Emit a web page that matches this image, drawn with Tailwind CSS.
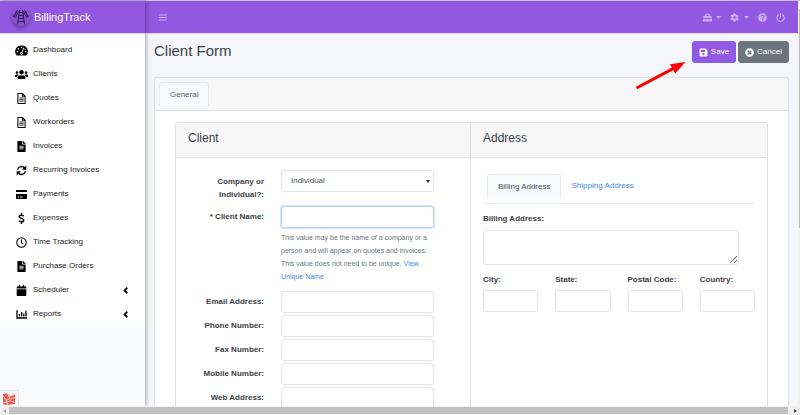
<!DOCTYPE html>
<html lang="en">
<head>
<meta charset="utf-8">
<meta name="viewport" content="width=device-width, initial-scale=1">
<title>BillingTrack - Client Form</title>
<script src="https://cdn.jsdelivr.net/npm/@tailwindcss/browser@4"></script>
</head>
<body class="relative flex h-screen flex-col overflow-hidden bg-[#f4f6fa] font-['Liberation_Sans',Arial,sans-serif] text-[8px] leading-3 text-[#3c4146]">

<svg class="hidden" aria-hidden="true">
  <symbol id="file-outline" viewBox="0 0 384 512">
    <path fill="none" stroke="currentColor" stroke-width="48" stroke-linejoin="round" d="M24 24H240L360 144V488H24ZM232 30V152H356"/>
    <path fill="none" stroke="currentColor" stroke-width="36" d="M92 236H292M92 308H292M92 380H292"/>
  </symbol>
  <symbol id="file-solid" viewBox="0 0 384 512">
    <path fill="currentColor" d="M224 136V0H24C10.700 0 0 10.700 0 24v464c0 13.300 10.700 24 24 24h336c13.300 0 24-10.700 24-24V160H248c-13.200 0-24-10.800-24-24zm64 236c0 6.600-5.400 12-12 12H108c-6.600 0-12-5.400-12-12v-8c0-6.600 5.400-12 12-12h168c6.600 0 12 5.400 12 12v8zm0-64c0 6.600-5.400 12-12 12H108c-6.600 0-12-5.400-12-12v-8c0-6.600 5.400-12 12-12h168c6.600 0 12 5.400 12 12v8zm0-72v8c0 6.600-5.400 12-12 12H108c-6.600 0-12-5.400-12-12v-8c0-6.600 5.400-12 12-12h168c6.600 0 12 5.400 12 12zm96-114.100v6.100H256V0h6.100c6.400 0 12.500 2.500 17 7l97.900 98c4.500 4.500 7 10.600 7 16.900z"/>
  </symbol>
  <symbol id="chevron" viewBox="0 0 10 14">
    <path fill="none" stroke="currentColor" stroke-width="3.600" d="M8.500 1.500L3 7L8.500 12.500"/>
  </symbol>
</svg>

<div class="h-px shrink-0 bg-[#c9c4dc]"></div>

<div class="flex min-h-0 flex-1">
  <aside class="z-10 flex w-[145px] shrink-0 flex-col bg-[#f9fafc] shadow-[1px_0_4px_rgba(0,0,0,0.35)]">
    <a href="#" class="flex h-8 shrink-0 items-center gap-1 bg-[#9358e2] pl-3 text-[11px] text-white">
      <svg class="size-[18px] rounded-full shadow-[0_2px_4px_rgba(0,0,0,0.35)]" viewBox="0 0 36 36" fill="none" stroke="#2c1c45" aria-hidden="true">
        <circle cx="18" cy="18" r="17" fill="#8a4fd6" stroke="none"/>
        <path stroke-width="2" d="M15 4L11 33M21 4L25 33M14 9H22M13 15H23M13 21H24M12 27H25"/>
        <path stroke-width="1.800" d="M11 4L3 18M13 6L7 19M7 8L12 12M5 12L9 16M2 15L7 20M25 4L33 18M23 6L29 19M29 8L24 12M31 12L27 16M34 15L29 20"/>
      </svg>
      BillingTrack
    </a>
    <nav aria-label="Main" class="border-t border-[#e4d8f6] bg-white pt-1 pb-[2px] text-[#1c1c1c]">
      <a href="#" class="flex h-6 items-center gap-[5px] pl-[15px]">
        <svg class="h-[11px] w-[13px] text-black" viewBox="0 0 26 22" aria-hidden="true"><path fill="currentColor" d="M13 1A12 12 0 0 0 3 20.500Q3.300 21 4 21H22Q22.700 21 23 20.500A12 12 0 0 0 13 1Z"/><g fill="#fff"><circle cx="13" cy="4.800" r="1.500"/><circle cx="7" cy="7.500" r="1.500"/><circle cx="4.700" cy="13.500" r="1.500"/><circle cx="21.300" cy="13.500" r="1.500"/><circle cx="19.700" cy="8" r="1.200"/></g><path stroke="#fff" stroke-width="1.800" d="M17.500 5.500L13.600 16"/><circle cx="13" cy="17" r="2.400" fill="#fff"/><circle cx="13" cy="17" r="1" fill="currentColor"/></svg>
        Dashboard
      </a>
      <a href="#" class="flex h-6 items-center gap-[5px] pl-[15px]">
        <svg class="h-[11px] w-[13px] text-black" viewBox="0 0 640 512" aria-hidden="true"><path fill="currentColor" d="M96 224c35.300 0 64-28.700 64-64s-28.700-64-64-64-64 28.700-64 64 28.700 64 64 64zm448 0c35.300 0 64-28.700 64-64s-28.700-64-64-64-64 28.700-64 64 28.700 64 64 64zm32 32h-64c-17.600 0-33.500 7.100-45.100 18.600 40.300 22.100 68.900 62 75.100 109.400h66c17.700 0 32-14.300 32-32v-32c0-35.300-28.700-64-64-64zm-256 0c61.900 0 112-50.100 112-112S381.900 32 320 32 208 82.100 208 144s50.100 112 112 112zm76.800 32h-8.300c-20.800 10-43.900 16-68.500 16s-47.600-6-68.500-16h-8.300C179.600 288 128 339.600 128 403.200V432c0 26.500 21.500 48 48 48h288c26.500 0 48-21.500 48-48v-28.800c0-63.600-51.600-115.200-115.200-115.200zm-223.700-13.400C161.500 263.100 145.600 256 128 256H64c-35.300 0-64 28.700-64 64v32c0 17.700 14.300 32 32 32h65.900c6.300-47.400 34.900-87.300 75.200-109.400z"/></svg>
        Clients
      </a>
      <a href="#" class="flex h-6 items-center gap-[5px] pl-[15px]">
        <svg class="h-[11px] w-[13px] text-black" aria-hidden="true"><use href="#file-outline"/></svg>
        Quotes
      </a>
      <a href="#" class="flex h-6 items-center gap-[5px] pl-[15px]">
        <svg class="h-[11px] w-[13px] text-black" aria-hidden="true"><use href="#file-outline"/></svg>
        Workorders
      </a>
      <a href="#" class="flex h-6 items-center gap-[5px] pl-[15px]">
        <svg class="h-[11px] w-[13px] text-black" aria-hidden="true"><use href="#file-solid"/></svg>
        Invoices
      </a>
      <a href="#" class="flex h-6 items-center gap-[5px] pl-[15px]">
        <svg class="h-[11px] w-[13px] text-black" viewBox="0 0 24 24" fill="none" stroke="currentColor" stroke-width="3" aria-hidden="true"><path d="M3.500 10A9 9 0 0 1 19 6.500M20.500 14A9 9 0 0 1 5 17.500"/><path fill="currentColor" stroke="none" d="M22.500 1V10.500H13ZM1.500 23V13.500H11Z"/></svg>
        Recurring Invoices
      </a>
      <a href="#" class="flex h-6 items-center gap-[5px] pl-[15px]">
        <svg class="h-[11px] w-[13px] text-black" viewBox="0 0 26 22" aria-hidden="true"><path fill="currentColor" d="M3.500 2H22.500Q24 2 24 3.500V6H2V3.500Q2 2 3.500 2ZM2 10H24V18.500Q24 20 22.500 20H3.500Q2 20 2 18.500Z"/><path stroke="#fff" stroke-width="1.800" d="M5 16H8M10 16H15"/></svg>
        Payments
      </a>
      <a href="#" class="flex h-6 items-center gap-[5px] pl-[15px]">
        <svg class="h-[11px] w-[13px] text-black" viewBox="0 0 26 22" fill="none" stroke="currentColor" stroke-width="2.800" aria-hidden="true"><path d="M17.500 6.500C16 5 14.500 4.500 12.500 4.500C10 4.500 8.500 5.600 8.500 7.500C8.500 12 17.500 9.500 17.500 14.500C17.500 16.500 15.700 17.500 13.300 17.500C11.300 17.500 9.500 16.800 8 15.500M13 0V4.500M13 17.500V22"/></svg>
        Expenses
      </a>
      <a href="#" class="flex h-6 items-center gap-[5px] pl-[15px]">
        <svg class="h-[11px] w-[13px] text-black" viewBox="0 0 24 24" fill="none" stroke="currentColor" stroke-width="2.300" aria-hidden="true"><circle cx="12" cy="12" r="10.300"/><path d="M12 5.500V12.500L16 15.500"/></svg>
        Time Tracking
      </a>
      <a href="#" class="flex h-6 items-center gap-[5px] pl-[15px]">
        <svg class="h-[11px] w-[13px] text-black" aria-hidden="true"><use href="#file-solid"/></svg>
        Purchase Orders
      </a>
      <a href="#" class="flex h-6 items-center gap-[5px] pr-[17px] pl-[15px]">
        <svg class="h-[11px] w-[13px] text-black" viewBox="0 0 448 512" aria-hidden="true"><path fill="currentColor" d="M0 464c0 26.500 21.500 48 48 48h352c26.500 0 48-21.500 48-48V192H0v272zm448-352c0-26.500-21.500-48-48-48h-48V12c0-6.600-5.400-12-12-12h-40c-6.600 0-12 5.400-12 12v52H160V12c0-6.600-5.400-12-12-12h-40c-6.600 0-12 5.400-12 12v52H48C21.500 64 0 85.500 0 112v48h448v-48z"/></svg>
        <span class="flex-1">Scheduler</span>
        <svg class="h-[7px] w-[5px] text-black" aria-hidden="true"><use href="#chevron"/></svg>
      </a>
      <a href="#" class="flex h-6 items-center gap-[5px] pr-[17px] pl-[15px]">
        <svg class="h-[11px] w-[13px] text-black" viewBox="0 0 26 22" fill="none" stroke="currentColor" aria-hidden="true"><path stroke-width="2.600" d="M4 2.500V18H24"/><path stroke-width="2.600" d="M9 10V15M13.300 6V15M17.600 9V15M22 3.500V15"/></svg>
        <span class="flex-1">Reports</span>
        <svg class="h-[7px] w-[5px] text-black" aria-hidden="true"><use href="#chevron"/></svg>
      </a>
    </nav>
    <button type="button" aria-label="Debug bar" class="mt-auto flex h-4 w-[19px] items-center border-t border-r border-[#e3e5e8] bg-[#f5f6f7] pl-[3px]">
      <svg class="size-3" viewBox="0 0 24 24" aria-hidden="true"><path fill="#f4533d" d="M0 2L8 1L15 6L24 1V22L6 24L0 22Z"/><path fill="none" stroke="#fff" stroke-width="1.500" d="M0 5L6 14L24 9M6 14L9 24M9 1L14 11M12 6L24 3M0 20L15 16L24 19"/></svg>
    </button>
  </aside>

  <div class="flex min-w-0 flex-1 flex-col">
    <header class="flex h-8 shrink-0 items-center bg-[#9358e2] pr-[13px] pl-[14px] text-[#c9adf0]">
      <button type="button" aria-label="Toggle sidebar">
        <svg class="h-[7px] w-2" viewBox="0 0 16 14" stroke="currentColor" stroke-width="2.400" aria-hidden="true"><path d="M0 2H16M0 7H16M0 12H16"/></svg>
      </button>
      <div class="ml-auto flex items-center gap-[9px]">
        <button type="button" aria-label="Tools" class="flex items-center gap-1">
          <svg class="size-[9px]" viewBox="0 0 18 18" aria-hidden="true"><path fill="none" stroke="currentColor" stroke-width="2" d="M5.500 6V2.500H12.500V6"/><path fill="currentColor" d="M2 5.500H16L18 8V10.500H13V9.500H11V10.500H7V9.500H5V10.500H0V8ZM0 12H5V13H7V12H11V13H13V12H18V17H0Z"/></svg>
          <svg class="h-[3px] w-[5px]" viewBox="0 0 10 6" aria-hidden="true"><path fill="currentColor" d="M0 0H10L5 5.500Z"/></svg>
        </button>
        <button type="button" aria-label="Settings" class="flex items-center gap-[5px]">
          <svg class="size-[9px]" viewBox="0 0 18 18" fill="none" stroke="currentColor" aria-hidden="true"><circle cx="9" cy="9" r="4.500" stroke-width="3.600"/><path stroke-width="4" d="M9 .5V4M9 14V17.500M1.600 4.800L4.700 6.500M13.300 11.500L16.400 13.200M1.600 13.200L4.700 11.500M13.300 6.500L16.400 4.800"/></svg>
          <svg class="h-[3px] w-[5px]" viewBox="0 0 10 6" aria-hidden="true"><path fill="currentColor" d="M0 0H10L5 5.500Z"/></svg>
        </button>
        <button type="button" aria-label="Help">
          <svg class="size-[9px]" viewBox="0 0 18 18" aria-hidden="true"><circle cx="9" cy="9" r="8.700" fill="currentColor"/><path fill="none" stroke="#9358e2" stroke-width="2.200" d="M6 6.800C6.500 3.500 12 3.800 12 6.800C12 8.800 9.200 8.700 9.200 11"/><circle cx="9.200" cy="13.600" r="1.400" fill="#9358e2"/></svg>
        </button>
        <button type="button" aria-label="Log out">
          <svg class="size-[9px]" viewBox="0 0 18 18" fill="none" stroke="currentColor" stroke-width="2.200" stroke-linecap="round" aria-hidden="true"><path d="M5 3.500A7.300 7.300 0 1 0 13 3.500M9 1V8.500"/></svg>
        </button>
      </div>
    </header>

    <main class="min-h-0 flex-1 overflow-hidden border-t border-[#e4d8f6] px-[9px]">
      <div class="flex h-[43px] items-start justify-between pt-[7px]">
        <h1 class="pt-[2px] text-[15px] leading-4 text-[#3c4146]">Client Form</h1>
        <div class="flex gap-[2px]">
          <button type="submit" form="client-form" class="flex h-[22px] items-center gap-[3px] rounded-[3px] border border-[#7d63e6] bg-[#9358e2] px-[6px] text-white">
            <svg class="size-[9px]" viewBox="0 0 448 512" aria-hidden="true"><path fill="currentColor" d="M433.900 129.900l-83.900-83.900A48 48 0 0 0 316.100 32H48C21.500 32 0 53.500 0 80v352c0 26.500 21.500 48 48 48h352c26.500 0 48-21.500 48-48V163.900a48 48 0 0 0-14.100-34zM224 416c-35.300 0-64-28.700-64-64s28.700-64 64-64 64 28.700 64 64-28.700 64-64 64zm96-304.500V212c0 6.600-5.400 12-12 12H76c-6.600 0-12-5.400-12-12V108c0-6.600 5.400-12 12-12h228.500c3.200 0 6.200 1.300 8.500 3.500l3.500 3.500a12 12 0 0 1 3.500 8.500z"/></svg>
            Save
          </button>
          <button type="button" class="flex h-[22px] items-center gap-[3px] rounded-[3px] border border-[#6c757d] bg-[#6c757d] px-[6px] text-white">
            <svg class="size-[9px]" viewBox="0 0 512 512" aria-hidden="true"><path fill="currentColor" d="M256 8C119 8 8 119 8 256s111 248 248 248 248-111 248-248S393 8 256 8zm121.600 313.100c4.700 4.700 4.700 12.300 0 17L338 377.600c-4.700 4.700-12.300 4.700-17 0L256 312l-65.100 65.600c-4.700 4.700-12.300 4.700-17 0L134.400 338c-4.700-4.700-4.700-12.300 0-17l65.600-65-65.600-65.100c-4.700-4.700-4.700-12.300 0-17l39.600-39.600c4.700-4.700 12.300-4.700 17 0l65 65.700 65.100-65.600c4.700-4.700 12.300-4.700 17 0l39.600 39.600c4.700 4.700 4.700 12.300 0 17L312 256l65.600 65.100z"/></svg>
            Cancel
          </button>
        </div>
      </div>

      <section class="rounded-[3px] border border-[#dfe2e6] bg-white shadow-[0_0_1px_rgba(0,0,0,0.15)]">
        <div class="h-[33px] rounded-t-[3px] border-b border-[#e2e4e6] bg-[#f7f7f7] pt-1 pl-1">
          <div class="flex h-7 w-[54px]">
            <a href="#" aria-current="page" class="flex h-[24px] items-center rounded-t-[3px] border border-b-0 border-[#e6eaee] bg-[#f9fafc] px-[10px] text-[#5b636b]">General</a>
          </div>
        </div>

        <form id="client-form" class="px-5 pt-[11px]">
          <div class="grid h-[420px] grid-cols-[294fr_297fr] rounded-t-[3px] border border-[#dfe1e3]">
            <section>
              <h2 class="h-[35px] rounded-tl-[3px] border-b border-[#e2e4e6] bg-[#f7f7f7] pt-[7px] pl-3 text-[12px] leading-4">Client</h2>
              <div class="grid grid-cols-[88px_1fr] gap-x-[17px] pt-3 pr-9">
                <label for="kind" class="pt-[5px] text-right leading-[13px] font-bold">Company or Individual?:</label>
                <div class="relative mb-[14px]">
                  <select id="kind" class="h-[22px] w-full appearance-none rounded-[3px] border border-[#e2e6ea] bg-white px-[9px] text-[#495057]"><option>Individual</option><option>Company</option></select>
                  <svg class="pointer-events-none absolute top-[10px] right-1 h-[3px] w-1" viewBox="0 0 8 6" aria-hidden="true"><path fill="#222" d="M0 0H8L4 6Z"/></svg>
                </div>

                <label for="name" class="pt-[5px] text-right font-bold">* Client Name:</label>
                <div class="mb-2">
                  <input id="name" type="text" aria-describedby="name-help" class="block h-[22px] w-full rounded-[3px] border border-[#b9d7f7] bg-white px-[9px] ring-1 ring-[#cfe3fa] outline-none">
                  <p id="name-help" class="mt-[3px] -mr-2 text-[7px] leading-[13px] text-[#6c757d]">This value may be the name of a company or a<br>person and will appear on quotes and invoices.<br>This value does not need to be unique. <a href="#" class="text-[#3d8ae0]">View<br>Unique Name</a></p>
                </div>

                <label for="email" class="pt-[5px] text-right font-bold">Email Address:</label>
                <input id="email" type="email" class="mb-[2px] h-[22px] w-full rounded-[3px] border border-[#e2e6ea] bg-white px-[9px]">
                <label for="phone" class="pt-[5px] text-right font-bold">Phone Number:</label>
                <input id="phone" type="tel" class="mb-[2px] h-[22px] w-full rounded-[3px] border border-[#e2e6ea] bg-white px-[9px]">
                <label for="fax" class="pt-[5px] text-right font-bold">Fax Number:</label>
                <input id="fax" type="tel" class="mb-[2px] h-[22px] w-full rounded-[3px] border border-[#e2e6ea] bg-white px-[9px]">
                <label for="mobile" class="pt-[5px] text-right font-bold">Mobile Number:</label>
                <input id="mobile" type="tel" class="mb-[2px] h-[22px] w-full rounded-[3px] border border-[#e2e6ea] bg-white px-[9px]">
                <label for="web" class="pt-[5px] text-right font-bold">Web Address:</label>
                <input id="web" type="url" class="mb-[2px] h-[22px] w-full rounded-[3px] border border-[#e2e6ea] bg-white px-[9px]">
              </div>
            </section>

            <section class="border-l border-[#dfe1e3]">
              <h2 class="h-[35px] rounded-tr-[3px] border-b border-[#e2e4e6] bg-[#f7f7f7] pt-[7px] pl-3 text-[12px] leading-4">Address</h2>
              <div class="px-3 pt-4">
                <div class="flex h-[30px] border-b border-[#e9ecef] pl-1">
                  <a href="#" aria-current="page" class="flex h-6 items-center rounded-t-[3px] border border-b-0 border-[#e6eaee] bg-[#f8f9fb] px-[10px] text-[#495057]">Billing Address</a>
                  <a href="#" class="flex h-6 items-center px-[10px] text-[#3d8ae0]">Shipping Address</a>
                </div>
                <label for="address" class="mt-[9px] block font-bold">Billing Address:</label>
                <textarea id="address" class="mt-[5px] block h-[35px] w-[94%] rounded-[3px] border border-[#e2e6ea] bg-white px-[9px]"></textarea>
                <div class="mt-[9px] grid grid-cols-4 gap-x-[17px]">
                  <div><label for="city" class="block font-bold">City:</label><input id="city" type="text" class="mt-1 block h-[22px] w-full rounded-[3px] border border-[#e2e6ea] bg-white px-1"></div>
                  <div><label for="state" class="block font-bold">State:</label><input id="state" type="text" class="mt-1 block h-[22px] w-full rounded-[3px] border border-[#e2e6ea] bg-white px-1"></div>
                  <div><label for="postal" class="block font-bold whitespace-nowrap">Postal Code:</label><input id="postal" type="text" class="mt-1 block h-[22px] w-full rounded-[3px] border border-[#e2e6ea] bg-white px-1"></div>
                  <div><label for="country" class="block font-bold">Country:</label><input id="country" type="text" class="mt-1 block h-[22px] w-full rounded-[3px] border border-[#e2e6ea] bg-white px-1"></div>
                </div>
              </div>
            </section>
          </div>
        </form>
      </section>
    </main>
  </div>

  <div class="w-[2px] shrink-0 bg-[#f1f1f1]" aria-hidden="true"><div class="mt-2 ml-px h-[54%] bg-[#bdbdbd]"></div></div>
</div>

<div class="z-20 flex h-[9px] shrink-0 items-center gap-[3px] bg-[#f1f1f1] px-[3px]" aria-hidden="true">
  <svg class="h-1 w-[3px]" viewBox="0 0 6 8"><path fill="#a3a3a3" d="M6 0V8L0 4Z"/></svg>
  <div class="h-[7px] flex-1 bg-[#c1c1c1]"></div>
  <svg class="ml-[3px] h-1 w-[3px]" viewBox="0 0 6 8"><path fill="#404040" d="M0 0V8L6 4Z"/></svg>
</div>

<svg class="pointer-events-none absolute top-[60px] right-[112px] z-30 h-[31px] w-[54px]" viewBox="0 0 54 31" aria-hidden="true">
  <path stroke="#f00" stroke-width="3" d="M2.500 28L40 8.100"/>
  <path fill="#f00" d="M51.500 2L36 4.200L41.200 13.600Z"/>
</svg>
</body>
</html>
